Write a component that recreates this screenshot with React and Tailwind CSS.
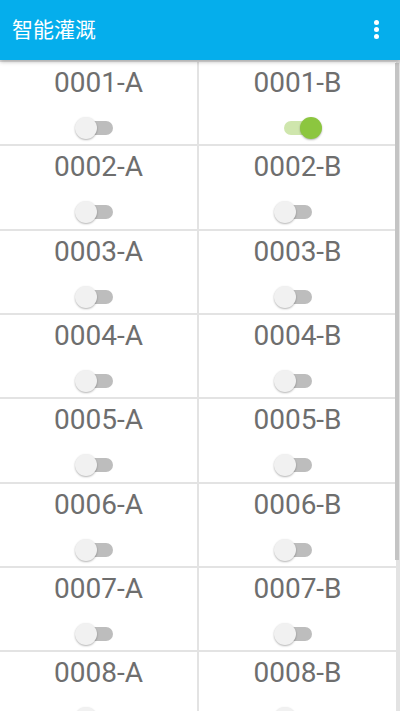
import React from "react";

function Switch({ on }) {
  return (
    <div className="relative w-[48px] h-[24px]">
      <div
        className={
          "absolute left-[10px] top-[5px] w-[28px] h-[14px] rounded-full " +
          (on ? "bg-[#cfe6ad]" : "bg-[#bdbdbd]")
        }
      />
      <div
        className={
          "absolute top-[1px] w-[22px] h-[22px] rounded-full shadow-[0_1px_2px_rgba(0,0,0,0.3)] " +
          (on ? "left-[26px] bg-[#8cc63f]" : "left-[0px] bg-[#f1f1f1]")
        }
      />
    </div>
  );
}

function Cell({ label, on }) {
  return (
    <div className="bg-white h-[82.33px] flex flex-col items-center pt-[7px]">
      <div className="text-[28px] leading-[28px] text-[#6e6e6e] [font-family:Roboto,'Liberation_Sans',sans-serif]">
        {label}
      </div>
      <div className="mt-[19px]">
        <Switch on={on} />
      </div>
    </div>
  );
}

export default function App() {
  const rows = [];
  for (let i = 1; i <= 8; i++) {
    rows.push(String(i).padStart(4, "0"));
  }
  return (
    <div className="relative w-[400px] h-[711px] overflow-hidden bg-[#e3e3e3] [font-family:Roboto,'Noto_Sans_CJK_SC',sans-serif]">
      <div className="relative z-10 h-[60px] bg-[#05aeec] shadow-[0_2px_4px_rgba(0,0,0,0.25)] flex items-start justify-between">
        <div className="pl-[12px] pt-[15px] text-white text-[21px] leading-[26px] [font-family:'Noto_Sans_CJK_SC',sans-serif]">
          智能灌溉
        </div>
        <div className="flex flex-col items-center gap-[2px] pr-[21px] pt-[20px]">
          <div className="w-[5px] h-[5px] rounded-full bg-white" />
          <div className="w-[5px] h-[5px] rounded-full bg-white" />
          <div className="w-[5px] h-[5px] rounded-full bg-white" />
        </div>
      </div>
      <div className="grid grid-cols-2 gap-[2px] pt-[2px] pr-[4px]">
        {rows.map((n) => (
          <React.Fragment key={n}>
            <Cell label={`${n}-A`} on={false} />
            <Cell label={`${n}-B`} on={n === "0001"} />
          </React.Fragment>
        ))}
      </div>
      <div className="absolute right-[1px] top-[63px] w-[4px] h-[497px] bg-[#c4c4c4]" />
    </div>
  );
}
